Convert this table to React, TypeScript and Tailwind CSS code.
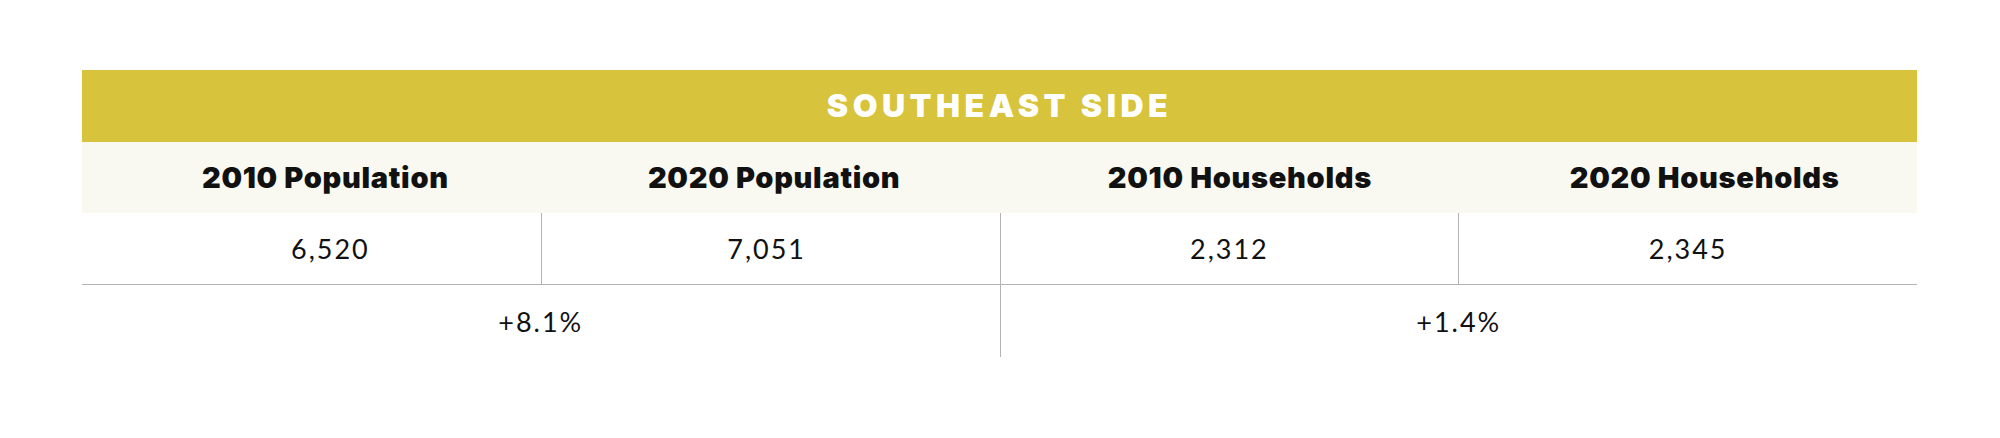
const headers = ['2010 Population', '2020 Population', '2010 Households', '2020 Households']
const values = ['6,520', '7,051', '2,312', '2,345']

// small nudges so the labels sit where the original table puts them
const headerPad = ['pl-[28px]', 'pl-[8px]', 'pl-[22px]', 'pl-[34px]']
const valuePad = ['pl-[38px]', 'pr-[8px]', '', '']

const App = () => {
  return (
    <div className="min-h-screen bg-white pt-[70px] pl-[82px] font-['Lato',sans-serif] text-[#111111]">
      <div className="w-[1835px]">
        <div className="flex h-[72px] items-center justify-center bg-[#d8c33c]">
          <h1 className="font-['Inter',sans-serif] text-[32px] font-black uppercase leading-none tracking-[4.5px] text-white">
            Southeast Side
          </h1>
        </div>

        <div className="grid h-[71px] grid-cols-4 bg-[#f9f9f1]">
          {headers.map((h, i) => (
            <div key={h} className={`flex items-center justify-center ${headerPad[i]}`}>
              <span className="font-['Inter',sans-serif] text-[29px] font-black leading-none tracking-[0.7px]">{h}</span>
            </div>
          ))}
        </div>

        <div className="grid h-[72px] grid-cols-4 border-b border-[#b3b3b3]">
          {values.map((v, i) => (
            <div
              key={v}
              className={`flex items-center justify-center ${i > 0 ? 'border-l border-[#b3b3b3]' : ''} ${valuePad[i]}`}
            >
              <span className="text-[27px] leading-none tracking-[2px]">{v}</span>
            </div>
          ))}
        </div>

        <div className="grid h-[72px] grid-cols-2">
          <div className="flex items-center justify-center">
            <span className="text-[27px] leading-none tracking-[2px]">+8.1%</span>
          </div>
          <div className="flex items-center justify-center border-l border-[#b3b3b3]">
            <span className="text-[27px] leading-none tracking-[2px]">+1.4%</span>
          </div>
        </div>
      </div>
    </div>
  )
}

export default App
